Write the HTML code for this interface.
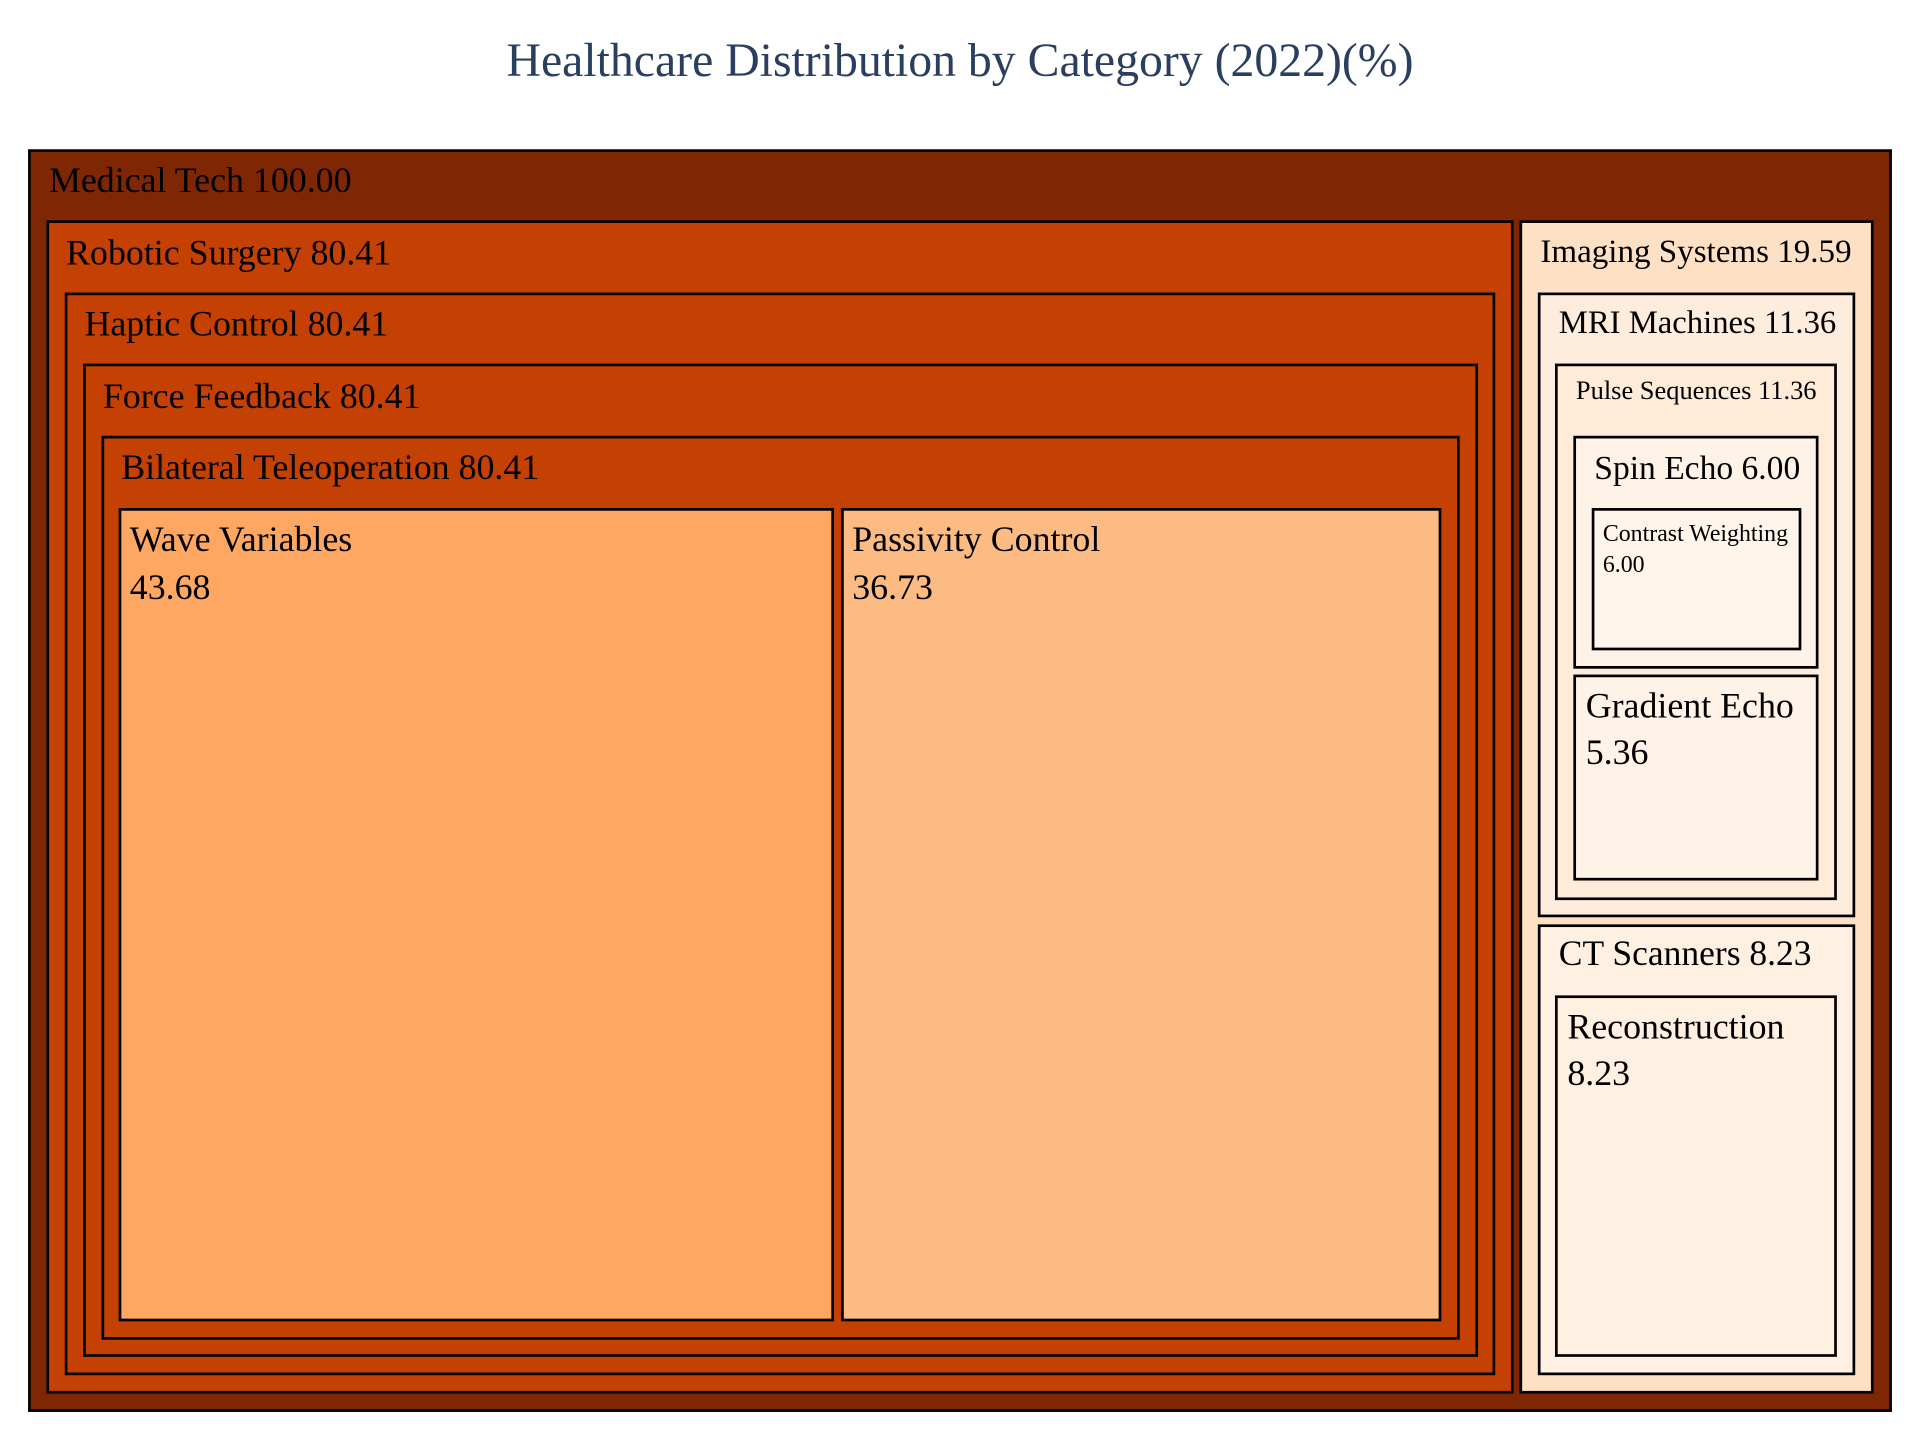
<!DOCTYPE html>
<html><head><meta charset="utf-8"><style>html,body{margin:0;padding:0;background:#fff}svg{display:block}text{font-family:"Liberation Serif",serif;fill:#000}</style></head>
<body>
<svg width="1920" height="1440" viewBox="0 0 1568 1176" xmlns="http://www.w3.org/2000/svg">
<rect width="1568" height="1176" fill="#fff"/>
<text x="784" y="62" text-anchor="middle" font-size="39" style="fill:#2a3f5f">Healthcare Distribution by Category (2022)(%)</text>
<g stroke="#000" stroke-width="2.2">
<rect x="24" y="123" width="1520" height="1029" fill="#7f2704"/>
<rect x="39" y="181" width="1196" height="956" fill="#c44103"/>
<rect x="54" y="240" width="1166" height="882" fill="#c44103"/>
<rect x="69" y="298" width="1137" height="809" fill="#c44103"/>
<rect x="84" y="357" width="1107" height="736" fill="#c44103"/>
<rect x="98" y="416" width="582" height="662" fill="#fda762"/>
<rect x="688" y="416" width="488" height="662" fill="#fcbb83"/>
<rect x="1242" y="181" width="287" height="956" fill="#fee1c5"/>
<rect x="1257" y="240" width="257" height="508" fill="#feeddd"/>
<rect x="1271" y="298" width="228" height="436" fill="#feebd8"/>
<rect x="1286" y="357" width="198" height="188" fill="#fff3e7"/>
<rect x="1301" y="416" width="169" height="114" fill="#fff5eb"/>
<rect x="1286" y="552" width="198" height="166" fill="#fff3e7"/>
<rect x="1257" y="756" width="257" height="366" fill="#fff0e2"/>
<rect x="1271" y="814" width="228" height="293" fill="#fff0e2"/>
</g>
<g font-size="29.3">
<text x="40" y="157">Medical Tech 100.00</text>
<text x="54" y="216">Robotic Surgery 80.41</text>
<text x="69" y="274">Haptic Control 80.41</text>
<text x="84" y="333">Force Feedback 80.41</text>
<text x="99" y="391">Bilateral Teleoperation 80.41</text>
<text x="106" y="450">Wave Variables</text>
<text x="106" y="489">43.68</text>
<text x="696" y="450">Passivity Control</text>
<text x="696" y="489">36.73</text>
<text x="1295" y="586">Gradient Echo</text>
<text x="1295" y="624">5.36</text>
<text x="1280" y="848">Reconstruction</text>
<text x="1280" y="886">8.23</text>
</g>
<text x="1258" y="214" font-size="27">Imaging Systems 19.59</text>
<text x="1273" y="272" font-size="26.7">MRI Machines 11.36</text>
<text x="1287" y="326" font-size="21.6">Pulse Sequences 11.36</text>
<text x="1302" y="391" font-size="27.4">Spin Echo 6.00</text>
<text x="1309" y="442" font-size="19.5">Contrast Weighting</text>
<text x="1309" y="467" font-size="19.5">6.00</text>
<text x="1273" y="788" font-size="29">CT Scanners 8.23</text>
</svg>
</body></html>
